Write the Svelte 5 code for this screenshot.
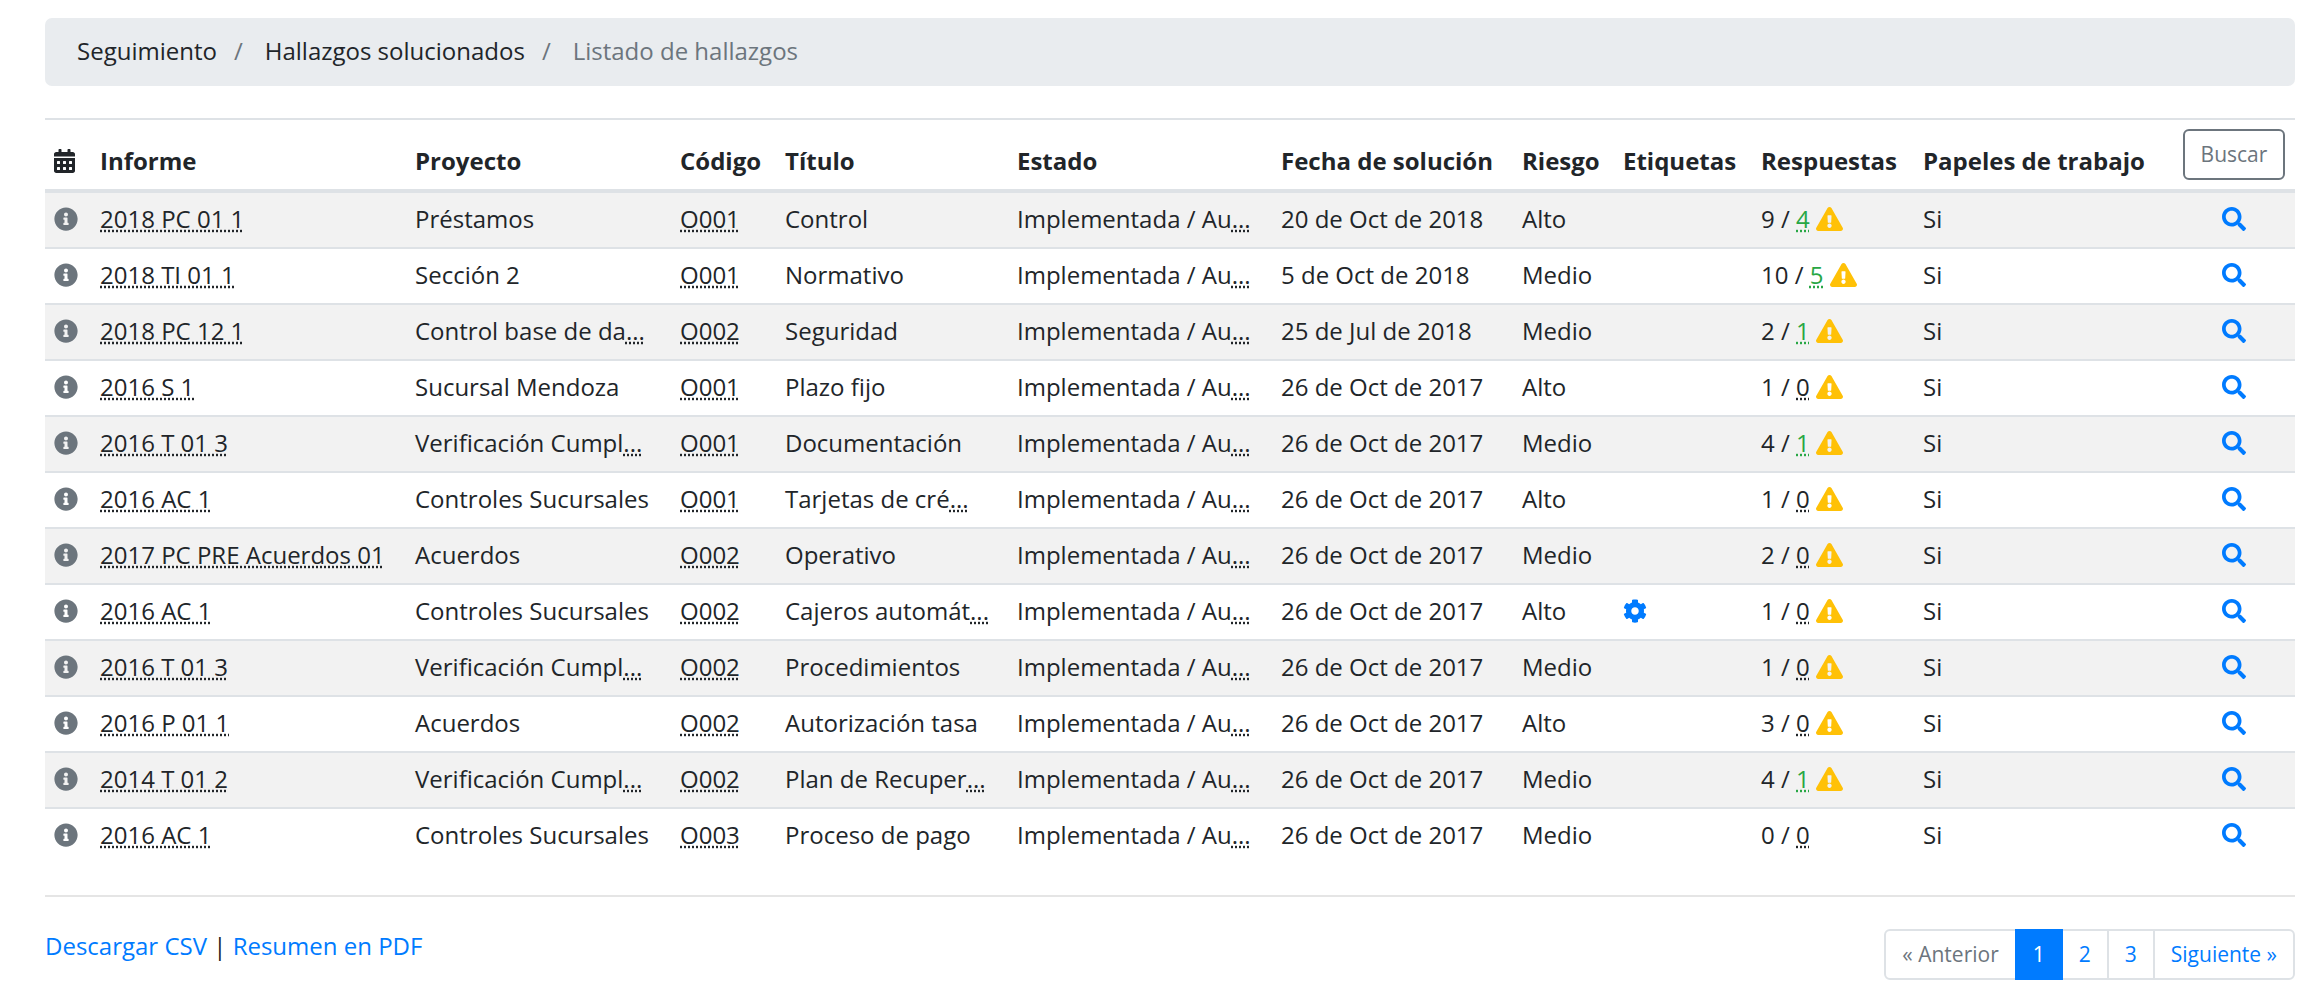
<script>
  const icons = {
    calendar: {
      box: '0 0 448 512',
      d: 'M0 464c0 26.5 21.5 48 48 48h352c26.5 0 48-21.5 48-48V192H0v272zm320-196c0-6.6 5.4-12 12-12h40c6.6 0 12 5.4 12 12v40c0 6.6-5.4 12-12 12h-40c-6.6 0-12-5.4-12-12v-40zm0 128c0-6.6 5.4-12 12-12h40c6.6 0 12 5.4 12 12v40c0 6.6-5.4 12-12 12h-40c-6.6 0-12-5.4-12-12v-40zM192 268c0-6.6 5.4-12 12-12h40c6.6 0 12 5.4 12 12v40c0 6.6-5.4 12-12 12h-40c-6.6 0-12-5.4-12-12v-40zm0 128c0-6.6 5.4-12 12-12h40c6.6 0 12 5.4 12 12v40c0 6.6-5.4 12-12 12h-40c-6.6 0-12-5.4-12-12v-40zM64 268c0-6.6 5.4-12 12-12h40c6.6 0 12 5.4 12 12v40c0 6.6-5.4 12-12 12H76c-6.6 0-12-5.4-12-12v-40zm0 128c0-6.6 5.4-12 12-12h40c6.6 0 12 5.4 12 12v40c0 6.6-5.4 12-12 12H76c-6.6 0-12-5.4-12-12v-40zM400 64h-48V16c0-8.8-7.2-16-16-16h-32c-8.8 0-16 7.2-16 16v48H160V16c0-8.8-7.2-16-16-16h-32c-8.8 0-16 7.2-16 16v48H48C21.5 64 0 85.5 0 112v48h448v-48c0-26.5-21.5-48-48-48z'
    },
    info: {
      box: '0 0 512 512',
      d: 'M256 8C119.043 8 8 119.083 8 256c0 136.997 111.043 248 248 248s248-111.003 248-248C504 119.083 392.957 8 256 8zm0 110c23.196 0 42 18.804 42 42s-18.804 42-42 42-42-18.804-42-42 18.804-42 42-42zm56 254c0 6.627-5.373 12-12 12h-88c-6.627 0-12-5.373-12-12v-24c0-6.627 5.373-12 12-12h12v-64h-12c-6.627 0-12-5.373-12-12v-24c0-6.627 5.373-12 12-12h64c6.627 0 12 5.373 12 12v100h12c6.627 0 12 5.373 12 12v24z'
    },
    search: {
      box: '0 0 512 512',
      d: 'M505 442.7L405.3 343c-4.5-4.5-10.6-7-17-7H372c27.6-35.3 44-79.7 44-128C416 93.1 322.9 0 208 0S0 93.1 0 208s93.1 208 208 208c48.3 0 92.7-16.4 128-44v16.3c0 6.4 2.5 12.5 7 17l99.7 99.7c9.4 9.4 24.6 9.4 33.9 0l28.3-28.3c9.4-9.4 9.4-24.6.1-34zM208 336c-70.7 0-128-57.2-128-128 0-70.7 57.2-128 128-128 70.7 0 128 57.2 128 128 0 70.7-57.2 128-128 128z'
    },
    warning: {
      box: '0 0 576 512',
      d: 'M569.517 440.013C587.975 472.007 564.806 512 527.94 512H48.054c-36.937 0-59.999-40.055-41.577-71.987L246.423 23.985c18.467-32.009 64.72-31.951 83.154 0l239.94 416.028zM288 354c-25.405 0-46 20.595-46 46s20.595 46 46 46 46-20.595 46-46-20.595-46-46-46zm-43.673-165.346l7.418 136c.347 6.364 5.609 11.346 11.982 11.346h48.546c6.373 0 11.635-4.982 11.982-11.346l7.418-136c.375-6.874-5.098-12.654-11.982-12.654h-63.383c-6.884 0-12.356 5.78-11.981 12.654z'
    },
    cog: {
      box: '0 0 512 512',
      d: 'M487.4 315.7l-42.6-24.6c4.3-23.2 4.3-47 0-70.2l42.6-24.6c4.9-2.8 7.1-8.6 5.5-14-11.1-35.6-30-67.8-54.7-94.6-3.8-4.1-10-5.1-14.8-2.3L380.8 110c-17.9-15.4-38.5-27.3-60.8-35.1V25.8c0-5.6-3.9-10.5-9.4-11.7-36.7-8.2-74.3-7.8-109.2 0-5.5 1.2-9.4 6.1-9.4 11.7V75c-22.2 7.9-42.8 19.8-60.8 35.1L88.7 85.5c-4.9-2.8-11-1.9-14.8 2.3-24.7 26.7-43.6 58.9-54.7 94.6-1.7 5.4.6 11.2 5.5 14L67.3 221c-4.3 23.2-4.3 47 0 70.2l-42.6 24.6c-4.9 2.8-7.1 8.6-5.5 14 11.1 35.6 30 67.8 54.7 94.6 3.8 4.1 10 5.1 14.8 2.3l42.6-24.6c17.9 15.4 38.5 27.3 60.8 35.1v49.2c0 5.6 3.9 10.5 9.4 11.7 36.7 8.2 74.3 7.8 109.2 0 5.5-1.2 9.4-6.1 9.4-11.7v-49.2c22.2-7.9 42.8-19.8 60.8-35.1l42.6 24.6c4.9 2.8 11 1.9 14.8-2.3 24.7-26.7 43.6-58.9 54.7-94.6 1.5-5.5-.7-11.3-5.6-14.1zM256 336c-44.1 0-80-35.9-80-80s35.9-80 80-80 80 35.9 80 80-35.9 80-80 80z'
    }
  };

  // Relative column weights, turned into percentages of the table
  const weights = [46, 315, 265, 105, 232, 264, 241, 101, 138, 162, 259, 122];
  const total = weights.reduce((a, b) => a + b, 0);

  const headings = [
    'Informe', 'Proyecto', 'Código', 'Título', 'Estado', 'Fecha de solución',
    'Riesgo', 'Etiquetas', 'Respuestas', 'Papeles de trabajo'
  ];

  // informe, proyecto, código, título, fecha, riesgo, respuestas, propias, alerta, etiqueta
  const rows = [
    ['2018 PC 01 1', 'Préstamos', 'O001', 'Control', '20 de Oct de 2018', 'Alto', 9, 4, true],
    ['2018 TI 01 1', 'Sección 2', 'O001', 'Normativo', '5 de Oct de 2018', 'Medio', 10, 5, true],
    ['2018 PC 12 1', 'Control base de da...', 'O002', 'Seguridad', '25 de Jul de 2018', 'Medio', 2, 1, true],
    ['2016 S 1', 'Sucursal Mendoza', 'O001', 'Plazo fijo', '26 de Oct de 2017', 'Alto', 1, 0, true],
    ['2016 T 01 3', 'Verificación Cumpl...', 'O001', 'Documentación', '26 de Oct de 2017', 'Medio', 4, 1, true],
    ['2016 AC 1', 'Controles Sucursales', 'O001', 'Tarjetas de cré...', '26 de Oct de 2017', 'Alto', 1, 0, true],
    ['2017 PC PRE Acuerdos 01', 'Acuerdos', 'O002', 'Operativo', '26 de Oct de 2017', 'Medio', 2, 0, true],
    ['2016 AC 1', 'Controles Sucursales', 'O002', 'Cajeros automát...', '26 de Oct de 2017', 'Alto', 1, 0, true, true],
    ['2016 T 01 3', 'Verificación Cumpl...', 'O002', 'Procedimientos', '26 de Oct de 2017', 'Medio', 1, 0, true],
    ['2016 P 01 1', 'Acuerdos', 'O002', 'Autorización tasa', '26 de Oct de 2017', 'Alto', 3, 0, true],
    ['2014 T 01 2', 'Verificación Cumpl...', 'O002', 'Plan de Recuper...', '26 de Oct de 2017', 'Medio', 4, 1, true],
    ['2016 AC 1', 'Controles Sucursales', 'O003', 'Proceso de pago', '26 de Oct de 2017', 'Medio', 0, 0, false]
  ];
</script>

{#snippet icon(name)}
  <svg class="icon" viewBox={icons[name].box} aria-hidden="true"><path fill="currentColor" d={icons[name].d} /></svg>
{/snippet}

{#snippet truncated(text)}
  {#if text.endsWith('...')}{text.slice(0, -3)}<abbr>...</abbr>{:else}{text}{/if}
{/snippet}

<div class="page">
  <nav>
    <ol class="breadcrumb">
      <li><a href="#seguimiento">Seguimiento</a></li>
      <li><a href="#solucionados">Hallazgos solucionados</a></li>
      <li class="current">Listado de hallazgos</li>
    </ol>
  </nav>

  <table>
    <colgroup>
      {#each weights as w}<col style:width="{(w / total) * 100}%" />{/each}
    </colgroup>
    <thead>
      <tr>
        <th>{@render icon('calendar')}</th>
        {#each headings as h}<th>{h}</th>{/each}
        <th class="action"><button type="button" class="search">Buscar</button></th>
      </tr>
    </thead>
    <tbody>
      {#each rows as [report, project, code, title, date, risk, answers, own, alert, tagged]}
        <tr>
          <td class="muted">{@render icon('info')}</td>
          <td><abbr>{report}</abbr></td>
          <td>{@render truncated(project)}</td>
          <td><abbr>{code}</abbr></td>
          <td>{@render truncated(title)}</td>
          <td>{@render truncated('Implementada / Au...')}</td>
          <td>{date}</td>
          <td>{risk}</td>
          <td class="blue">{#if tagged}{@render icon('cog')}{/if}</td>
          <td>{answers} / <abbr class:green={own > 0}>{own}</abbr>{#if alert}{' '}<span class="yellow">{@render icon('warning')}</span>{/if}</td>
          <td>Si</td>
          <td class="action"><a href="#ver">{@render icon('search')}</a></td>
        </tr>
      {/each}
    </tbody>
  </table>

  <hr />

  <footer>
    <div><a href="#csv">Descargar CSV</a> | <a href="#pdf">Resumen en PDF</a></div>
    <ul class="pagination">
      <li class="disabled"><span>« Anterior</span></li>
      <li class="active"><a href="#p1">1</a></li>
      <li><a href="#p2">2</a></li>
      <li><a href="#p3">3</a></li>
      <li><a href="#p2">Siguiente »</a></li>
    </ul>
  </footer>
</div>

<style>
  :global(body) {
    margin: 0;
    background: #fff;
  }
  .page {
    padding: 18px 29px 6px 45px;
    font-family: 'Open Sans', 'Noto Sans', sans-serif;
    font-size: 24px;
    line-height: 34px;
    color: #212529;
  }
  a {
    color: #007bff;
    text-decoration: none;
  }
  .breadcrumb {
    display: flex;
    flex-wrap: wrap;
    margin: 0 0 32px;
    padding: 16px 32px 18px;
    list-style: none;
    background: #e9ecef;
    border-radius: 7px;
  }
  .breadcrumb a {
    color: #212529;
  }
  .breadcrumb li + li::before {
    content: '/';
    padding: 0 22px 0 17px;
    color: #6c757d;
  }
  .breadcrumb .current {
    color: #6c757d;
  }
  table {
    width: 100%;
    table-layout: fixed;
    border-collapse: separate;
    border-spacing: 0;
  }
  th,
  td {
    padding: 9px 9px 11px;
    text-align: left;
    white-space: nowrap;
    border-top: 2px solid #dee2e6;
  }
  th {
    vertical-align: bottom;
    border-bottom: 2px solid #dee2e6;
  }
  tbody tr:nth-child(odd) {
    background: #f2f2f2;
  }
  .action {
    text-align: center;
  }
  th.action {
    padding-bottom: 9px;
  }
  .muted {
    color: #6c757d;
  }
  .blue {
    color: #007bff;
  }
  .green {
    color: #28a745;
  }
  .yellow {
    color: #ffc107;
  }
  .icon {
    height: 24px;
    vertical-align: -3px;
  }
  abbr {
    text-decoration: underline dotted;
  }
  .search {
    display: block;
    margin: 0 auto;
    padding: 8px 16px;
    font: inherit;
    font-size: 21px;
    font-weight: 400;
    line-height: 31px;
    color: #6c757d;
    background: transparent;
    border: 2px solid #6c757d;
    border-radius: 6px;
  }
  hr {
    margin: 32px 0;
    border: 0;
    border-top: 2px solid rgba(0, 0, 0, 0.1);
  }
  footer {
    display: flex;
    justify-content: space-between;
    align-items: flex-start;
  }
  .pagination {
    display: flex;
    margin: 0;
    padding: 0;
    list-style: none;
    font-size: 21px;
    line-height: 31px;
  }
  .pagination li > * {
    display: block;
    margin-left: -2px;
    padding: 8px 16px;
    border: 2px solid #dee2e6;
  }
  .pagination li:first-child > * {
    border-radius: 6px 0 0 6px;
  }
  .pagination li:last-child > * {
    border-radius: 0 6px 6px 0;
  }
  .pagination .active > * {
    position: relative;
    color: #fff;
    background: #007bff;
    border-color: #007bff;
  }
  .pagination .disabled > * {
    color: #6c757d;
  }
</style>
